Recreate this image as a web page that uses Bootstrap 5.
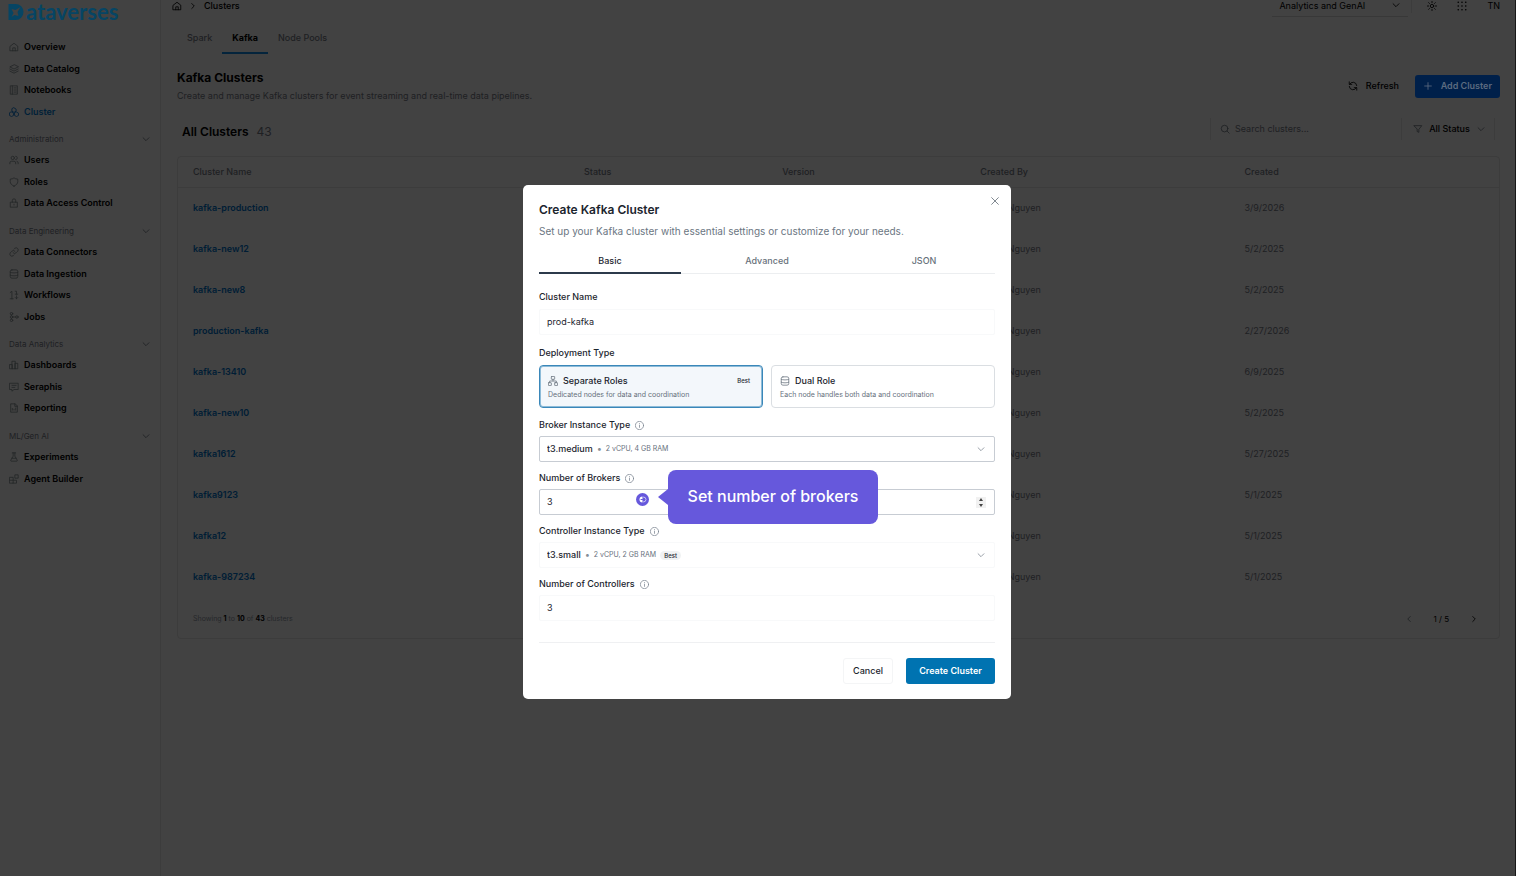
<!DOCTYPE html>
<html lang="en">
<head>
<meta charset="utf-8">
<meta name="viewport" content="width=device-width, initial-scale=1">
<title>Kafka Clusters</title>
<link href="https://cdn.jsdelivr.net/npm/bootstrap@5.3.0/dist/css/bootstrap.min.css" rel="stylesheet">
<style>
:root{--page:#424242;--edge:#3c3c3c;--dim:#1e2023;--link:#001d35}
body{font-family:Inter,"Liberation Sans",sans-serif;font-size:9px;line-height:12px;color:#000;background:var(--page);border-right:1px solid #181818}
a{text-decoration:none;color:inherit}
button,input,select{font:inherit;color:inherit}
svg{fill:none;stroke:currentColor;stroke-width:2;stroke-linecap:round;stroke-linejoin:round;flex:none;width:10px;height:10px}
.flat{background:transparent;border:0;padding:0}
.dimmed{color:var(--dim)}
/* sidebar */
.shell{min-height:100vh}
.side{width:161px;border-right:1px solid var(--edge)}
.brand{height:36px;color:#064564;font:700 22px/24px Lato,sans-serif;padding-left:8px;gap:2px}
.brand svg{width:16px;height:16px;stroke:none;margin-top:4px}
.side .item{height:22px;padding-left:9px;gap:5px;font-weight:600}
.side li:nth-child(even) .item{height:21px}
.side .item svg{color:#242628}
.side .item.on,.side .item.on svg{color:#001f38}
.side .grp{width:142px;height:16px;margin:9px 0 2px 9px;font-size:8px;color:var(--dim)}
/* page header */
.work{padding:0 15px 0 16px;min-width:0}
.top{height:22px;margin-left:-5px}
.crumbs{gap:6px;height:12px}
.tools{height:12px}
.space{width:136px;height:17px;padding:0 7px;border-bottom:1px solid #383838!important;margin-top:4px}
.tools .rule{width:1px;height:14px;background:var(--edge);margin:0 15px 0 3px}
.tools .icons{gap:20px}
.tabs{height:32px;color:var(--dim)}
.tabs a{padding:10px 10px 0;font-weight:500;border-bottom:2px solid transparent}
.tabs a.on{color:#000;font-weight:700;border-color:#04243c}
.intro{margin-top:16px;height:32px}
h1{font-size:12px;line-height:16px;font-weight:700;margin:0 0 4px}
.add{background:#00204a;color:#5c6b80;border:0;border-radius:3px;width:85px;height:23px;padding:0 8px;font-weight:600}
.toolbar{margin:16px 5px 12px;height:26px}
.toolbar h2{font-size:12px;line-height:27px;font-weight:600;margin:0}
.toolbar .count{font-size:12px;line-height:27px;color:var(--dim)}
.find,.stat{height:22px;border-left:1px solid var(--edge)}
.find{width:191px;padding-left:9px;gap:5px;color:var(--dim)}
.find input{width:140px;outline:0}
.find input::placeholder{color:var(--dim);opacity:1}
.stat{width:94px;border-right:1px solid var(--edge)!important;border-left:1px solid var(--edge)!important;padding:0 8px 0 11px}
/* table */
.panel{border:1px solid var(--edge);border-radius:4px}
.grid{width:100%;table-layout:fixed}
.grid th{font-weight:500;color:var(--dim);height:30px;padding:0 0 0 15px;border-bottom:1px solid var(--edge)}
.grid td{height:41px;padding:0 0 0 15px;color:var(--dim)}
.grid td a{color:var(--link);font-weight:600}
.pager{height:41px;padding:2px 20px 0 15px;font-size:7px;color:#25272a}
.pager b{color:#000}
.pager .pages{font-size:8px;gap:20px;color:#000}
/* dialog */
.veil{position:fixed;inset:0;padding:8px 0 0 18px}
.dlg{width:488px;background:#fff;border-radius:5px;padding:16px 16px 15px;color:#1c252e;position:relative;font-weight:500}
.dlg h2{font-size:12px;line-height:18px;font-weight:600;margin:0 0 5px}
.dlg .sub{font-size:10px;line-height:14px;color:#6b7682;font-weight:400;margin:0 0 11px}
.shut{position:absolute;right:11px;top:11px;color:#68717b}
.steps{border-bottom:1px solid #eceef0;color:#68717b;height:25px;margin-bottom:16px;gap:15px}
.steps button{flex:1;border-bottom:2px solid transparent;margin-bottom:-1px}
.steps button.on{color:#1c252e;border-color:#2c3a4b}
.lab{display:flex;align-items:center;gap:5px;height:14px;margin-bottom:4px}
.lab svg{color:#7b8490;width:9px;height:9px}
.ctl{height:26px;border:1px solid #c7ccd3;border-radius:2px;padding:0 8px 0 7px;position:relative;background:#fff;margin-bottom:9px;color:#868e97}
.ctl.soft{border-color:#f8f9fa}
.ctl select,.ctl input{border:0;padding:0;background:none;appearance:none;-moz-appearance:textfield;outline:0;color:#1c252e}
.ctl input{width:90px;font-weight:400}
.ctl input::-webkit-inner-spin-button{display:none}
.ctl select{font-weight:500}
.roomy .lab{margin-bottom:5px}
.roomy .ctl{margin-bottom:11px}
.roomy .opts{margin-bottom:10px}
.note{font-size:7px;line-height:12px;color:#66707c;font-weight:400}
.opt .note{margin-top:2px}
.tag{font-size:6px;line-height:9px;background:#f0f2f3;border-radius:5px;padding:0 4px;color:#1c252e}
.opts{gap:8px}
.opt{height:43px;border:1px solid #dadee2;border-radius:4px;padding:8px 8px 6px;background:#fff;text-align:left;flex:1}
.opt.on{background:#f3f7fb;border-color:#3a87b9;box-shadow:0 0 0 1px #8dbbd8 inset}
.opt.on .tag{background:none}
.opt svg{color:#717b86}
.opt .name{gap:5px;height:13px}
.foot{border-top:1px solid #eff0f2;padding-top:15px;margin-top:21px;gap:13px}
.foot button{height:26px;border-radius:3px;padding:0}
.no{width:50px;border:1px solid #f4f5f6;background:#fff}
.yes{width:89px;border:0;background:#0073b1;color:#fff;font-weight:600}
.spin{width:10px;height:11px;background:#f1f1f1;color:#444}
.spin svg{fill:currentColor;stroke:none;height:11px}
.tip{position:absolute;left:128px;top:-20px;width:210px;height:54px;border-radius:8px;background:#6658dc;color:#fff;font-size:16px;line-height:53px;font-weight:500;text-align:center;z-index:2}
.tip::before{content:"";position:absolute;left:-10px;top:19px;border:8px solid transparent;border-left:0;border-right:10px solid #6658dc}
.dot{position:absolute;left:96px;top:3px;width:13px;height:13px}
</style>
</head>
<body>
<svg class="d-none" aria-hidden="true">
<symbol id="home" viewBox="0 0 24 24"><path d="M3 10l9-7 9 7v11H3zM9 21v-7h6v7"/></symbol>
<symbol id="down" viewBox="0 0 24 24"><path d="M5 9l7 7 7-7"/></symbol>
<symbol id="right" viewBox="0 0 24 24"><path d="M9 6l6 6-6 6"/></symbol>
<symbol id="left" viewBox="0 0 24 24"><path d="M15 6l-6 6 6 6"/></symbol>
<symbol id="layers" viewBox="0 0 24 24"><path d="M12 2L2 7l10 5 10-5zM2 12l10 5 10-5M2 17l10 5 10-5"/></symbol>
<symbol id="note" viewBox="0 0 24 24"><path d="M4 2h16v20H4zM8 2v20M12 7h5M12 12h5M12 17h5"/></symbol>
<symbol id="cubes" viewBox="0 0 24 24"><path d="M12 2l5 3v5l-5 3-5-3V5zM6 12l5 3v5l-5 3-5-3v-5zM18 12l5 3v5l-5 3-5-3v-5z"/></symbol>
<symbol id="users" viewBox="0 0 24 24"><circle cx="9" cy="7" r="4"/><path d="M2 21v-2a4 4 0 0 1 4-4h6a4 4 0 0 1 4 4v2M16 3a4 4 0 0 1 0 8M22 21v-2a4 4 0 0 0-3-4"/></symbol>
<symbol id="shield" viewBox="0 0 24 24"><path d="M12 22c6-3 9-6 9-11V5c-4 0-6-1-9-3-3 2-5 3-9 3v6c0 5 3 8 9 11z"/></symbol>
<symbol id="lock" viewBox="0 0 24 24"><path d="M4 10h16v12H4zM8 10V6a4 4 0 0 1 8 0v4M12 15v2"/></symbol>
<symbol id="plug" viewBox="0 0 24 24"><path d="M10 14a5 5 0 0 0 7 0l4-4a5 5 0 0 0-7-7l-2 2M14 10a5 5 0 0 0-7 0l-4 4a5 5 0 0 0 7 7l2-2"/></symbol>
<symbol id="data" viewBox="0 0 24 24"><rect x="3" y="2" width="18" height="20" rx="4"/><path d="M3 8c4 2 14 2 18 0M3 15c4 2 14 2 18 0"/></symbol>
<symbol id="flow" viewBox="0 0 24 24"><path d="M3 6l4-3v18M3 21h7M15 3h3v7M15 10h6M18 14v7M15 18l3 3 3-3"/></symbol>
<symbol id="jobs" viewBox="0 0 24 24"><circle cx="6" cy="4" r="3"/><circle cx="6" cy="12" r="3"/><circle cx="6" cy="20" r="3"/><circle cx="19" cy="12" r="3"/><path d="M9 12h7M6 7v2M6 15v2"/></symbol>
<symbol id="bars" viewBox="0 0 24 24"><path d="M2 11h6v10H2zM8 3h7v18H8zM15 8h6v13h-6z"/></symbol>
<symbol id="chat" viewBox="0 0 24 24"><path d="M2 3h20v15H12l-5 4v-4H2zM7 8h10M7 13h7"/></symbol>
<symbol id="file" viewBox="0 0 24 24"><path d="M14 2H4v20h16V8zM14 2v6h6M8 17v-4M12 17v-2M16 17v-5"/></symbol>
<symbol id="flask" viewBox="0 0 24 24"><path d="M8 2h8M10 2v8L4 20q0 2 2 2h12q2 0 2-2l-6-10V2M7 15h10"/></symbol>
<symbol id="blocks" viewBox="0 0 24 24"><path d="M2 8h8v14H2zM2 15h16v7H10M15 2h7v8h-7z"/></symbol>
<symbol id="tree" viewBox="0 0 24 24"><rect x="8" y="1" width="8" height="7" rx="1"/><rect x="1" y="16" width="7" height="7" rx="1"/><rect x="16" y="16" width="7" height="7" rx="1"/><path d="M12 8v4M4 16v-4h16v4"/></symbol>
<symbol id="info" viewBox="0 0 24 24"><circle cx="12" cy="12" r="11"/><path d="M12 11v6M12 7v.1"/></symbol>
</svg>
<div class="shell d-flex">
<aside class="side flex-shrink-0">
<a href="#" class="brand d-flex"><svg viewBox="0 0 15 16"><path fill="currentColor" fill-rule="evenodd" d="M0 0h7a8 8 0 0 1 0 16H0zM3 13l3-2 4 1-1-4 3-5-5 3-4-1 2 4z"/></svg><span>ataverses</span></a>
<nav>
<ul class="list-unstyled m-0">
<li><a href="#" class="item d-flex align-items-center"><svg><use href="#home"/></svg>Overview</a></li>
<li><a href="#" class="item d-flex align-items-center"><svg><use href="#layers"/></svg>Data Catalog</a></li>
<li><a href="#" class="item d-flex align-items-center"><svg><use href="#note"/></svg>Notebooks</a></li>
<li><a href="#" class="item on d-flex align-items-center"><svg><use href="#cubes"/></svg>Cluster</a></li>
</ul>
<button class="grp flat d-flex align-items-center justify-content-between">Administration<svg><use href="#down"/></svg></button>
<ul class="list-unstyled m-0">
<li><a href="#" class="item d-flex align-items-center"><svg><use href="#users"/></svg>Users</a></li>
<li><a href="#" class="item d-flex align-items-center"><svg><use href="#shield"/></svg>Roles</a></li>
<li><a href="#" class="item d-flex align-items-center"><svg><use href="#lock"/></svg>Data Access Control</a></li>
</ul>
<button class="grp flat d-flex align-items-center justify-content-between">Data Engineering<svg><use href="#down"/></svg></button>
<ul class="list-unstyled m-0">
<li><a href="#" class="item d-flex align-items-center"><svg><use href="#plug"/></svg>Data Connectors</a></li>
<li><a href="#" class="item d-flex align-items-center"><svg><use href="#data"/></svg>Data Ingestion</a></li>
<li><a href="#" class="item d-flex align-items-center"><svg><use href="#flow"/></svg>Workflows</a></li>
<li><a href="#" class="item d-flex align-items-center"><svg><use href="#jobs"/></svg>Jobs</a></li>
</ul>
<button class="grp flat d-flex align-items-center justify-content-between">Data Analytics<svg><use href="#down"/></svg></button>
<ul class="list-unstyled m-0">
<li><a href="#" class="item d-flex align-items-center"><svg><use href="#bars"/></svg>Dashboards</a></li>
<li><a href="#" class="item d-flex align-items-center"><svg><use href="#chat"/></svg>Seraphis</a></li>
<li><a href="#" class="item d-flex align-items-center"><svg><use href="#file"/></svg>Reporting</a></li>
</ul>
<button class="grp flat d-flex align-items-center justify-content-between">ML/Gen AI<svg><use href="#down"/></svg></button>
<ul class="list-unstyled m-0">
<li><a href="#" class="item d-flex align-items-center"><svg><use href="#flask"/></svg>Experiments</a></li>
<li><a href="#" class="item d-flex align-items-center"><svg><use href="#blocks"/></svg>Agent Builder</a></li>
</ul>
</nav>
</aside>
<main class="work flex-grow-1">
<header class="top d-flex justify-content-between">
<div class="crumbs d-flex align-items-center fw-medium"><a href="#" class="d-flex" aria-label="Home"><svg><use href="#home"/></svg></a><svg><use href="#right"/></svg><span>Clusters</span></div>
<div class="tools d-flex align-items-center">
<button class="space flat d-flex justify-content-between">Analytics and GenAI<svg><use href="#down"/></svg></button>
<span class="rule"></span>
<div class="icons d-flex align-items-center">
<button class="flat d-flex" aria-label="Theme"><svg viewBox="0 0 24 24"><circle cx="12" cy="12" r="4"/><path d="M12 1v3M12 20v3M1 12h3M20 12h3M4 4l2 2M18 18l2 2M4 20l2-2M18 6l2-2"/></svg></button>
<button class="flat d-flex" aria-label="Apps"><svg viewBox="0 0 24 24" stroke-dasharray="0 9"><path stroke-width="4" d="M3 3h19M3 12h19M3 21h19"/></svg></button>
<button class="flat">TN</button>
</div>
</div>
</header>
<nav class="tabs d-flex"><a href="#">Spark</a><a href="#" class="on">Kafka</a><a href="#">Node Pools</a></nav>
<section class="intro d-flex justify-content-between align-items-center">
<div><h1>Kafka Clusters</h1><p class="dimmed m-0">Create and manage Kafka clusters for event streaming and real-time data pipelines.</p></div>
<div class="d-flex align-items-center">
<button class="flat d-flex align-items-center fw-medium me-3"><svg class="me-2" viewBox="0 0 24 24" stroke-width="3"><path d="M21 11a9 9 0 0 0-17-3M3 2v6h6M3 13a9 9 0 0 0 17 3M21 22v-6h-6"/></svg>Refresh</button>
<button class="add d-flex align-items-center justify-content-between"><svg viewBox="0 0 24 24"><path d="M12 4v16M4 12h16"/></svg>Add Cluster</button>
</div>
</section>
<section class="toolbar d-flex align-items-start">
<h2>All Clusters</h2><span class="count ms-2">43</span>
<label class="find ms-auto d-flex align-items-center"><svg viewBox="0 0 24 24"><circle cx="11" cy="11" r="8"/><path d="M17 17l5 5"/></svg><input class="flat" type="search" aria-label="Search clusters" placeholder="Search clusters..."></label>
<button class="stat flat d-flex align-items-center justify-content-between fw-medium"><svg class="dimmed" viewBox="0 0 24 24"><path d="M3 4h18l-7 9v7l-4-2v-5z"/></svg>All Status<svg class="dimmed"><use href="#down"/></svg></button>
</section>
<section class="panel">
<table class="grid">
<colgroup><col style="width:29.6%"><col style="width:15%"><col style="width:15%"><col style="width:20%"><col></colgroup>
<thead><tr><th>Cluster Name</th><th>Status</th><th>Version</th><th>Created By</th><th>Created</th></tr></thead>
<tbody>
<tr><td><a href="#">kafka-production</a></td><td></td><td></td><td>Trung Nguyen</td><td>3/9/2026</td></tr>
<tr><td><a href="#">kafka-new12</a></td><td></td><td></td><td>Trung Nguyen</td><td>5/2/2025</td></tr>
<tr><td><a href="#">kafka-new8</a></td><td></td><td></td><td>Trung Nguyen</td><td>5/2/2025</td></tr>
<tr><td><a href="#">production-kafka</a></td><td></td><td></td><td>Trung Nguyen</td><td>2/27/2026</td></tr>
<tr><td><a href="#">kafka-13410</a></td><td></td><td></td><td>Trung Nguyen</td><td>6/9/2025</td></tr>
<tr><td><a href="#">kafka-new10</a></td><td></td><td></td><td>Trung Nguyen</td><td>5/2/2025</td></tr>
<tr><td><a href="#">kafka1612</a></td><td></td><td></td><td>Trung Nguyen</td><td>5/27/2025</td></tr>
<tr><td><a href="#">kafka9123</a></td><td></td><td></td><td>Trung Nguyen</td><td>5/1/2025</td></tr>
<tr><td><a href="#">kafka12</a></td><td></td><td></td><td>Trung Nguyen</td><td>5/1/2025</td></tr>
<tr><td><a href="#">kafka-987234</a></td><td></td><td></td><td>Trung Nguyen</td><td>5/1/2025</td></tr>
</tbody>
</table>
<div class="pager d-flex align-items-center justify-content-between">
<span>Showing <b>1</b> to <b>10</b> of <b>43</b> clusters</span>
<div class="pages d-flex align-items-center"><button class="flat d-flex dimmed" aria-label="Previous"><svg><use href="#left"/></svg></button><span>1 / 5</span><button class="flat d-flex" aria-label="Next"><svg><use href="#right"/></svg></button></div>
</div>
</section>
</main>
</div>
<div class="veil d-flex justify-content-center align-items-center">
<form class="dlg" role="dialog" aria-labelledby="title">
<h2 id="title">Create Kafka Cluster</h2>
<button type="button" class="shut flat d-flex" aria-label="Close"><svg viewBox="0 0 24 24"><path d="M4 4l16 16M20 4L4 20"/></svg></button>
<p class="sub">Set up your Kafka cluster with essential settings or customize for your needs.</p>
<div class="steps d-flex"><button type="button" class="flat on">Basic</button><button type="button" class="flat">Advanced</button><button type="button" class="flat">JSON</button></div>
<div class="roomy">
<label class="lab" for="cname">Cluster Name</label>
<div class="ctl soft d-flex align-items-center"><input id="cname" type="text" value="prod-kafka"></div>
<div class="lab">Deployment Type</div>
<div class="opts d-flex">
<button type="button" class="opt on"><span class="name d-flex align-items-center"><svg><use href="#tree"/></svg>Separate Roles<span class="tag ms-auto">Best</span></span><span class="note d-block">Dedicated nodes for data and coordination</span></button>
<button type="button" class="opt"><span class="name d-flex align-items-center"><svg><use href="#data"/></svg>Dual Role</span><span class="note d-block">Each node handles both data and coordination</span></button>
</div>
</div>
<label class="lab" for="btype">Broker Instance Type<svg><use href="#info"/></svg></label>
<div class="ctl d-flex align-items-center"><select id="btype"><option>t3.medium</option></select><span class="mx-1">•</span><span class="note">2 vCPU, 4 GB RAM</span><svg class="ms-auto"><use href="#down"/></svg></div>
<label class="lab" for="bnum">Number of Brokers<svg><use href="#info"/></svg></label>
<div class="ctl d-flex align-items-center"><input id="bnum" type="number" value="3">
<svg class="dot" viewBox="0 0 26 26"><circle cx="13" cy="13" r="13" fill="#6658dc" stroke="none"/><path d="M13 7a6 6 0 0 0 0 12z" fill="#fff" stroke="none"/><path d="M15 8a5 5 0 0 1 0 10" stroke="#c9c4f3"/><path d="M10 13h3" stroke="#6658dc"/></svg>
<div class="tip" role="tooltip">Set number of brokers</div>
<span class="spin d-flex ms-auto"><svg viewBox="0 0 10 11"><path d="M5 1l2 3H3zM5 10l2-3H3z"/></svg></span></div>
<label class="lab" for="ctype">Controller Instance Type<svg><use href="#info"/></svg></label>
<div class="ctl soft d-flex align-items-center"><select id="ctype"><option>t3.small</option></select><span class="mx-1">•</span><span class="note">2 vCPU, 2 GB RAM</span><span class="tag ms-1">Best</span><svg class="ms-auto"><use href="#down"/></svg></div>
<label class="lab" for="cnum">Number of Controllers<svg><use href="#info"/></svg></label>
<div class="ctl soft d-flex align-items-center mb-0"><input id="cnum" type="number" value="3"></div>
<div class="foot d-flex justify-content-end"><button type="button" class="no">Cancel</button><button type="submit" class="yes">Create Cluster</button></div>
</form>
</div>
<script src="https://cdn.jsdelivr.net/npm/bootstrap@5.3.0/dist/js/bootstrap.bundle.min.js"></script>
</body>
</html>
